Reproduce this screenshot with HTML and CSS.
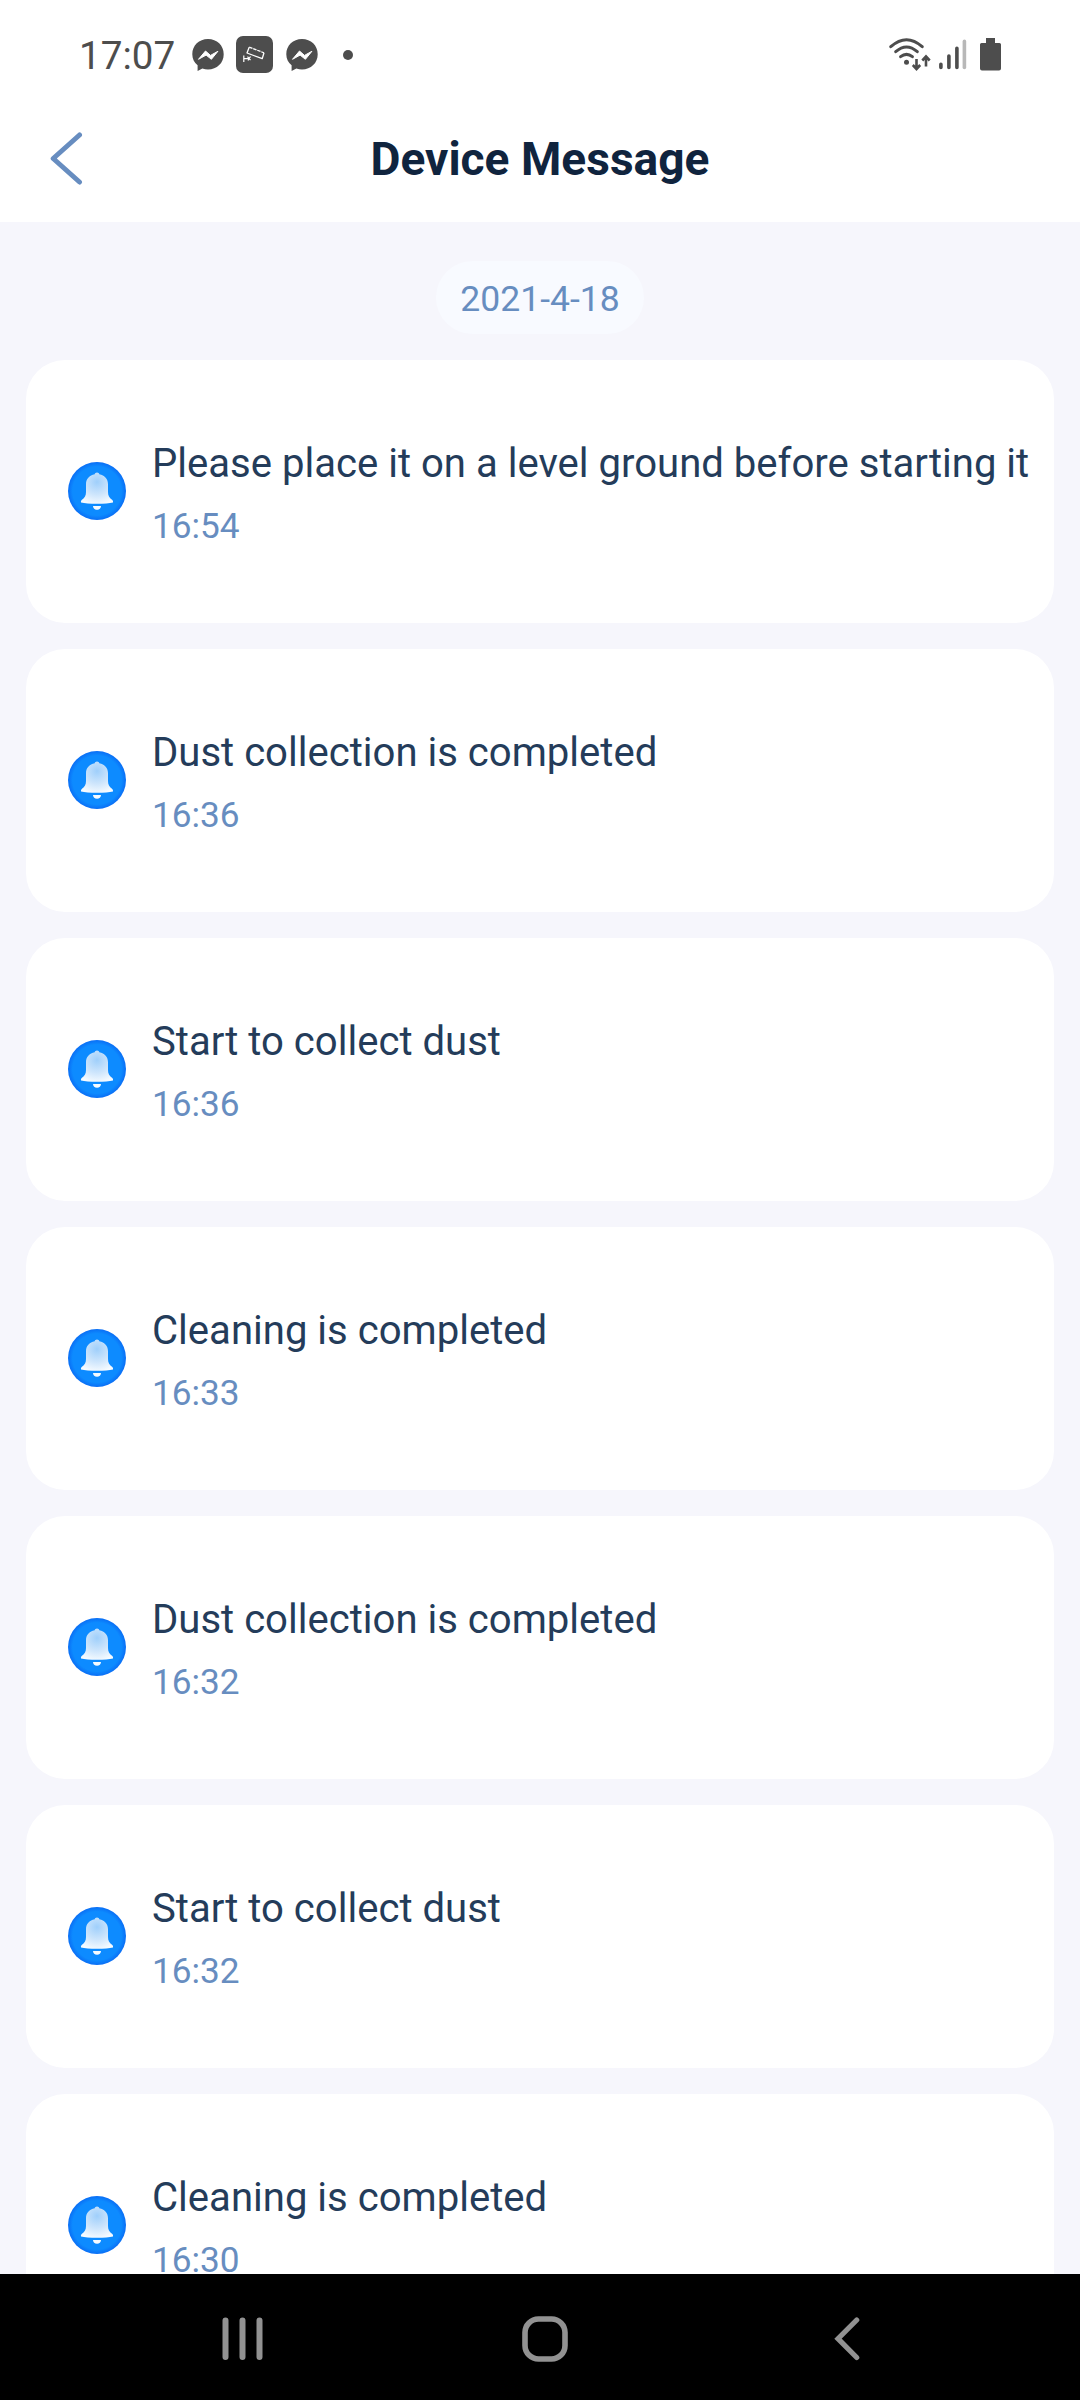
FILE: index.html
```html
<!DOCTYPE html>
<html lang="en">
<head>
<meta charset="utf-8">
<title>Device Message</title>
<link rel="stylesheet" href="styles.css">
</head>
<body>
<svg class="defs" width="0" height="0" aria-hidden="true">
  <defs>
    <radialGradient id="disc" cx="50%" cy="50%" r="50%">
      <stop offset="0.84" stop-color="#0d8bff"/>
      <stop offset="1" stop-color="#0a6ef5"/>
    </radialGradient>
    <radialGradient id="bellFill" gradientUnits="userSpaceOnUse" cx="29" cy="20" r="23">
      <stop offset="0" stop-color="#9fcffb"/>
      <stop offset="0.55" stop-color="#cde5fc"/>
      <stop offset="1" stop-color="#f6fbff"/>
    </radialGradient>
  </defs>
  <symbol id="bell" viewBox="0 0 58 58">
    <circle cx="29" cy="29" r="29" fill="url(#disc)"/>
    <path d="M29 10.5c1.3 0 2.1.7 2.3 1.8 5.400 1 8.700 4.700 8.700 9.900v7.800c0 3.800 1.300 5.600 4 7.700.9.700 1.200 1.700 1 2.800-3.500.9-9 1.200-16 1.200s-12.500-.3-16-1.200c-.2-1.100.1-2.100 1-2.800 2.700-2.100 4-3.900 4-7.700v-7.800c0-5.200 3.300-8.900 8.700-9.900.2-1.100 1-1.800 2.300-1.800z" fill="url(#bellFill)"/>
    <path d="M25 44h8c0 2.300-1.700 3.800-4 3.800s-4-1.500-4-3.800z" fill="#f6fbff"/>
  </symbol>
  <symbol id="messenger" viewBox="0 0 32 32">
    <path d="M16 0C7 0 .3 6.500.3 15.200c0 4.600 1.900 8.400 5.300 11V32l4.800-2.500c1.700.6 3.600.9 5.600.9 9 0 15.700-6.500 15.700-15.200S25 0 16 0z" fill="#4d4d4d"/>
    <path d="M6.500 20.300l7-8.300 5 4.400 7.400-4.100-6.500 8-5.300-4.200z" fill="#fff" stroke="#fff" stroke-width="1" stroke-linejoin="round"/>
  </symbol>
</svg>

<div class="screen">
  <div class="status-bar">
    <span class="clock">17:07</span>
    <svg class="messenger" width="32" height="32"><use href="#messenger"/></svg>
    <svg class="camera" width="37" height="37" viewBox="0 0 37 37">
      <rect width="37" height="37" rx="7" fill="#4d4d4d"/>
      <g fill="none" stroke="#fff" stroke-width="1.300" stroke-linejoin="round">
        <path d="M28 16.800l-1.800 5.900L11 17l2.200-5.800"/>
        <path d="M13.200 11.200L28 16.800" stroke-dasharray="3.500 .8"/>
        <path d="M7.800 19.500v6.500M7.800 22.700h5.200M11.500 20.700l3 3.500M14.500 20.500l-2.500 4" stroke-width="1.200"/>
      </g>
    </svg>
    <svg class="messenger" width="32" height="32"><use href="#messenger"/></svg>
    <span class="dot"></span>
    <svg class="wifi" width="42" height="33" viewBox="0 0 42 33">
      <g fill="none" stroke="#4d4d4d" stroke-width="3" stroke-linecap="round">
        <path d="M1.800 8.700Q17.500-5.200 33.200 8.700"/>
        <path d="M6.700 13.700Q17.500 4.300 28.300 13.700"/>
        <path d="M11.600 18.700Q17.500 14 23.400 18.700"/>
      </g>
      <circle cx="17.500" cy="24.300" r="2.500" fill="#4d4d4d"/>
      <path d="M27.500 21v9.500M23.800 27l3.700 4 3.700-4M37 28.500V19M33.300 22.500l3.700-4 3.700 4" fill="none" stroke="#4d4d4d" stroke-width="2.600"/>
    </svg>
    <svg class="signal" width="28" height="32" viewBox="0 0 28 32">
      <g stroke="#4d4d4d" stroke-width="3.600" stroke-linecap="round">
        <path d="M1.900 25.300v3.200M9.900 17v11.500M17.900 9.300v19.200"/>
        <path d="M25.400 2.400v26.100" stroke="#b8b8b8"/>
      </g>
    </svg>
    <svg class="battery" width="21" height="33" viewBox="0 0 21 33">
      <path d="M6 0h9v5h4.500a1.500 1.500 0 0 1 1.500 1.500v24a2 2 0 0 1-2 2H2a2 2 0 0 1-2-2v-24A1.500 1.500 0 0 1 1.500 5H6z" fill="#4d4d4d"/>
    </svg>
  </div>

  <header class="app-bar">
    <svg class="back" width="34" height="54" viewBox="0 0 34 54">
      <path d="M29.500 3L3.200 26.500 29.500 50" fill="none" stroke="#678dc0" stroke-width="5" stroke-linecap="round" stroke-linejoin="round"/>
    </svg>
    <h1 class="title">Device Message</h1>
  </header>

  <main class="messages">
    <div class="date">2021-4-18</div>
    <article class="card"><svg class="bell"><use href="#bell"/></svg><div class="body"><p class="text">Please place it on a level ground before starting it</p><time class="time">16:54</time></div></article>
    <article class="card"><svg class="bell"><use href="#bell"/></svg><div class="body"><p class="text">Dust collection is completed</p><time class="time">16:36</time></div></article>
    <article class="card"><svg class="bell"><use href="#bell"/></svg><div class="body"><p class="text">Start to collect dust</p><time class="time">16:36</time></div></article>
    <article class="card"><svg class="bell"><use href="#bell"/></svg><div class="body"><p class="text">Cleaning is completed</p><time class="time">16:33</time></div></article>
    <article class="card"><svg class="bell"><use href="#bell"/></svg><div class="body"><p class="text">Dust collection is completed</p><time class="time">16:32</time></div></article>
    <article class="card"><svg class="bell"><use href="#bell"/></svg><div class="body"><p class="text">Start to collect dust</p><time class="time">16:32</time></div></article>
    <article class="card"><svg class="bell"><use href="#bell"/></svg><div class="body"><p class="text">Cleaning is completed</p><time class="time">16:30</time></div></article>
  </main>

  <nav class="nav-bar">
    <svg width="42" height="44" viewBox="0 0 42 44">
      <path d="M3.500 3.500v36.500M20.500 3.500v36.500M37.500 3.500v36.500" stroke="#929292" stroke-width="6" stroke-linecap="round"/>
    </svg>
    <svg class="home" width="46" height="46" viewBox="0 0 46 46">
      <rect x="3" y="3" width="40" height="40" rx="13.500" fill="none" stroke="#929292" stroke-width="5.600"/>
    </svg>
    <svg width="26" height="44" viewBox="0 0 26 44">
      <path d="M22.700 3L4 21.700 22.700 40.500" fill="none" stroke="#929292" stroke-width="5.200" stroke-linecap="round"/>
    </svg>
  </nav>
</div>
</body>
</html>
```
FILE: styles.css
```css
* { box-sizing: border-box; }

body {
  margin: 0;
  font-family: Roboto, "Noto Sans", sans-serif;
  background: #fff;
}

.defs { position: absolute; }

svg { display: block; flex: none; }

.screen {
  display: flex;
  flex-direction: column;
  width: 1080px;
  height: 2400px;
  overflow: hidden;
}

.status-bar {
  display: flex;
  flex: none;
  align-items: center;
  height: 94px;
  padding: 16px 79px 0 79px;
}

.clock {
  width: 113px;
  padding-top: 1px;
  font-size: 38.7px;
  line-height: 46px;
  color: #4d4d4d;
}

.camera { margin: 0 13px 0 12px; }

.dot {
  width: 10px;
  height: 10px;
  margin-left: 25px;
  border-radius: 50%;
  background: #4d4d4d;
}

.status-bar > svg, .dot { margin-bottom: 1px; }

.wifi { margin-left: auto; }
.signal { margin: 0 13px 0 8px; }

.app-bar {
  display: grid;
  grid-template-columns: 98px 1fr 98px;
  flex: none;
  align-items: center;
  height: 128px;
  padding-top: 1px;
}

.back { margin-left: 50px; }

.title {
  margin: 0;
  font-size: 46.1px;
  font-weight: 700;
  line-height: 54px;
  text-align: center;
  color: #10243e;
}

.messages {
  display: flex;
  flex: 1;
  flex-direction: column;
  gap: 26px;
  min-height: 0;
  padding: 39px 26px 0;
  overflow: hidden;
  background: #f6f6fc;
}

.date {
  flex: none;
  align-self: center;
  width: 208px;
  height: 73px;
  border-radius: 37px;
  background: #f8faff;
  font-size: 35.5px;
  line-height: 76px;
  text-align: center;
  color: #678dc0;
}

.card {
  display: flex;
  flex: none;
  align-items: center;
  gap: 26px;
  height: 263px;
  padding-left: 42px;
  border-radius: 39px;
  background: #fff;
}

.bell { width: 58px; height: 58px; margin-bottom: 1px; }

.body { padding-top: 5px; }

.text {
  margin: 0 0 18px;
  font-size: 40.1px;
  line-height: 46px;
  white-space: nowrap;
  color: #243c5a;
}

.time {
  display: block;
  font-size: 35.2px;
  line-height: 42px;
  color: #678dc0;
}

.nav-bar {
  display: flex;
  flex: none;
  align-items: center;
  justify-content: space-between;
  height: 126px;
  padding: 4px 220px 0 222px;
  background: #000;
}

.home { margin-right: 8px; }
```
